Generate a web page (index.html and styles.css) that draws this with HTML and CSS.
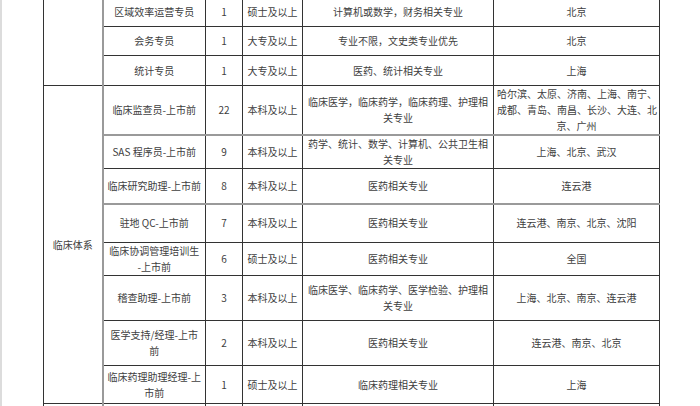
FILE: index.html
```html
<!DOCTYPE html>
<html lang="zh-CN">
<head>
<meta charset="utf-8">
<link rel="stylesheet" href="styles.css">
</head>
<body>
<div class="page">
<table class="jobs">
<colgroup>
<col class="c1"><col class="c2"><col class="c3"><col class="c4"><col class="c5"><col class="c6">
</colgroup>
<tbody>
<tr class="h29">
<td rowspan="3" class="group"></td>
<td class="pos">区域效率运营专员</td><td>1</td><td>硕士及以上</td><td>计算机或数学，财务相关专业</td><td>北京</td>
</tr>
<tr class="h29">
<td class="pos">会务专员</td><td>1</td><td>大专及以上</td><td>专业不限，文史类专业优先</td><td>北京</td>
</tr>
<tr class="h30">
<td class="pos">统计专员</td><td>1</td><td>大专及以上</td><td>医药、统计相关专业</td><td>上海</td>
</tr>
<tr class="h49 gray-bottom">
<td rowspan="8" class="group">临床体系</td>
<td class="pos">临床监查员-上市前</td><td>22</td><td>本科及以上</td><td>临床医学，临床药学，临床药理、护理相<br>关专业</td><td>哈尔滨、太原、济南、上海、南宁、<br>成都、青岛、南昌、长沙、大连、北<br>京、广州</td>
</tr>
<tr class="h33">
<td class="pos">SAS 程序员-上市前</td><td>9</td><td>本科及以上</td><td>药学、统计、数学、计算机、公共卫生相<br>关专业</td><td>上海、北京、武汉</td>
</tr>
<tr class="h35 gray-bottom">
<td class="pos">临床研究助理-上市前</td><td>8</td><td>本科及以上</td><td>医药相关专业</td><td>连云港</td>
</tr>
<tr class="h39">
<td class="pos">驻地 QC-上市前</td><td>7</td><td>本科及以上</td><td>医药相关专业</td><td>连云港、南京、北京、沈阳</td>
</tr>
<tr class="h33">
<td class="pos">临床协调管理培训生<br>-上市前</td><td>6</td><td>硕士及以上</td><td>医药相关专业</td><td>全国</td>
</tr>
<tr class="h45">
<td class="pos">稽查助理-上市前</td><td>3</td><td>本科及以上</td><td>临床医学、临床药学、医学检验、护理相<br>关专业</td><td>上海、北京、南京、连云港</td>
</tr>
<tr class="h45">
<td class="pos">医学支持/经理-上市<br>前</td><td>2</td><td>本科及以上</td><td>医药相关专业</td><td>连云港、南京、北京</td>
</tr>
<tr class="h38">
<td class="pos">临床药理助理经理-上<br>市前</td><td>1</td><td>硕士及以上</td><td>临床药理相关专业</td><td>上海</td>
</tr>
<tr class="h30">
<td class="group"></td><td class="pos"></td><td></td><td></td><td></td><td></td>
</tr>
</tbody>
</table>
</div>
</body>
</html>
```

FILE: styles.css
```css
html, body {
  margin: 0;
  padding: 0;
  background: #ffffff;
  overflow: hidden;
}

.page {
  height: 406px;
  overflow: hidden;
  border-left: 2px solid #dcdcdc;
  padding-left: 41px;
  box-sizing: border-box;
  width: 700px;
}

.jobs {
  margin-top: -3px;
  border-collapse: collapse;
  table-layout: fixed;
  width: 617px;
  font-family: "Noto Sans CJK SC", "Noto Sans", sans-serif;
  font-size: 10px;
  line-height: 16px;
  color: #404040;
}

.c1 { width: 59px; }
.c2 { width: 103px; }
.c3 { width: 37px; }
.c4 { width: 60px; }
.c5 { width: 191px; }
.c6 { width: 166px; }

.jobs td {
  border: 1px solid #333333;
  text-align: center;
  vertical-align: middle;
  padding: 0 3px;
  white-space: nowrap;
}

.jobs td.group {
  border-right: 2px solid #9a9a9a;
}

.jobs td.pos {
  border-left: 2px solid #9a9a9a;
}

.jobs tr.gray-bottom td {
  border-bottom: 2px solid #9a9a9a;
}

.jobs tr.gray-bottom td.group {
  border-bottom: 1px solid #333333;
}

.h29 { height: 29px; }
.h30 { height: 30px; }
.h33 { height: 33px; }
.h35 { height: 35px; }
.h38 { height: 38px; }
.h39 { height: 39px; }
.h45 { height: 45px; }
.h49 { height: 49px; }
```
